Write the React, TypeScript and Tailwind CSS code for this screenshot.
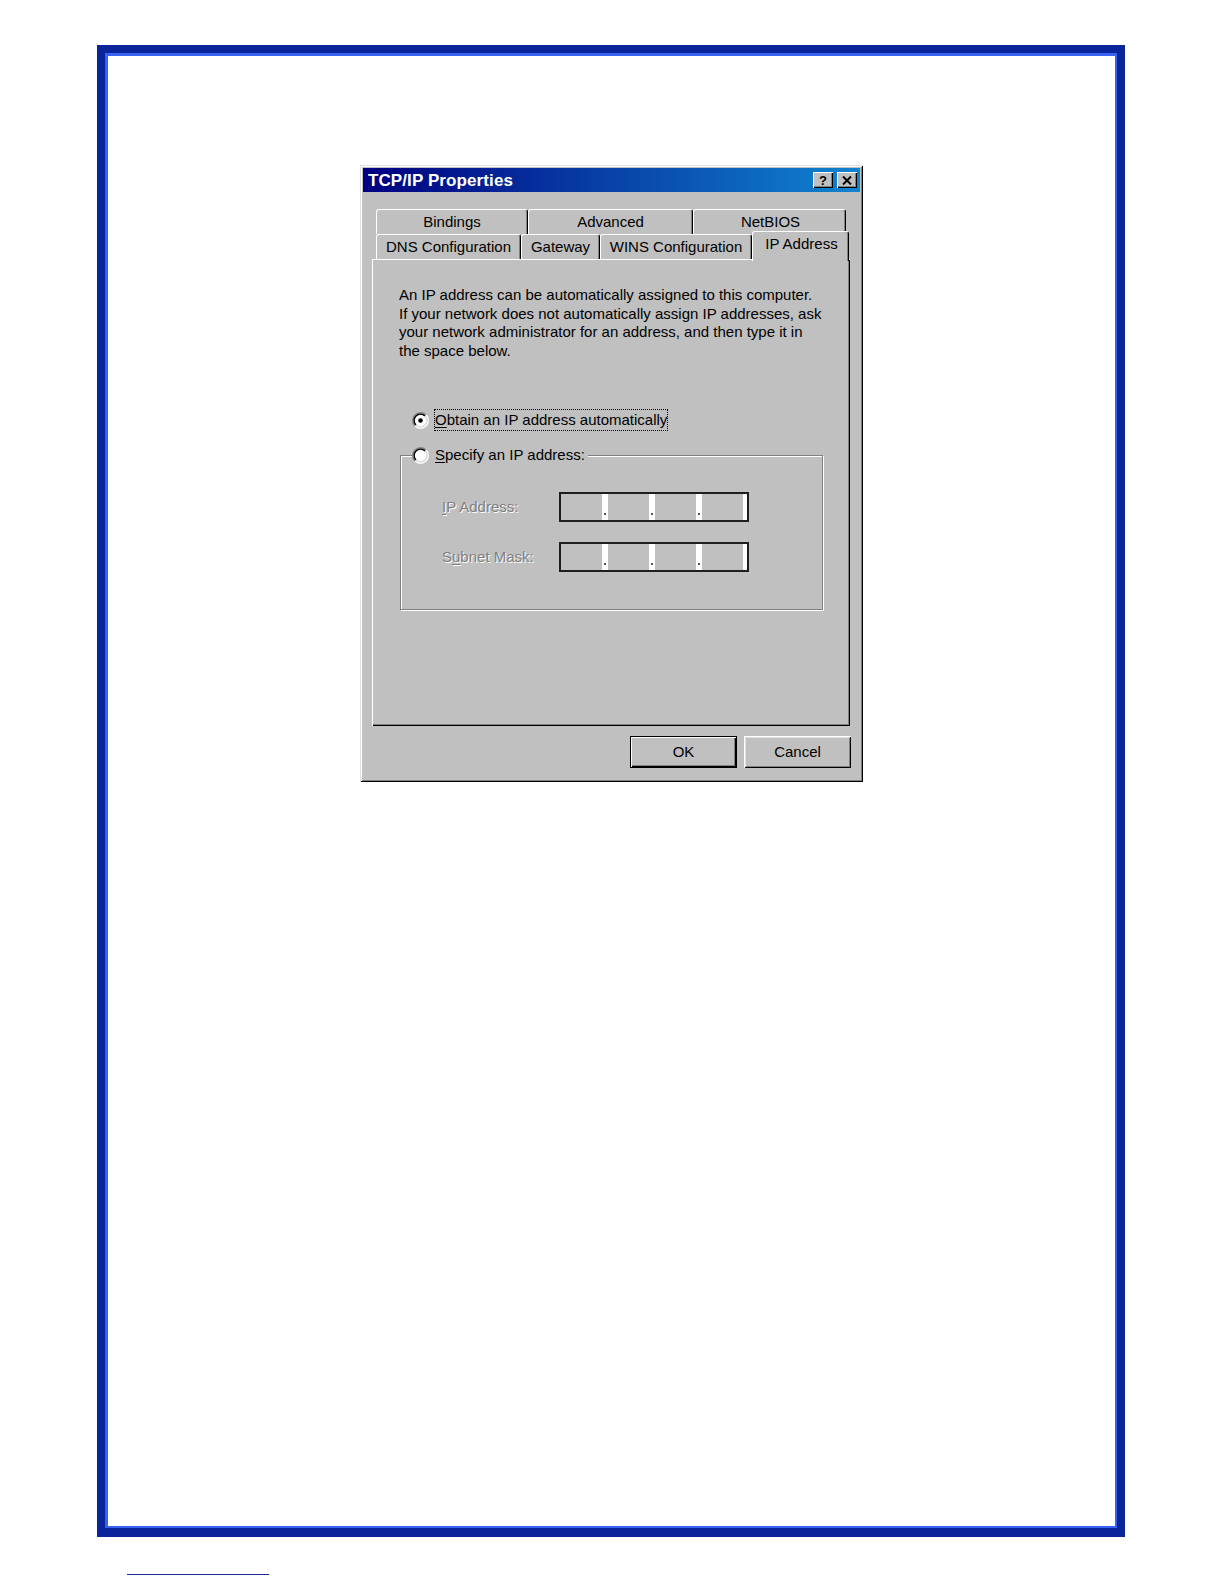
import React from "react";

function Radio({ checked }: { checked?: boolean }) {
  const c = 6;
  const p = (r: number) => {
    const d = r * 0.7071;
    return { blx: c - d, bly: c + d, trx: c + d, try_: c - d };
  };
  const o = p(5.5);
  const i = p(4.5);
  return (
    <svg width="17" height="17" viewBox="0 0 12 12" className="shrink-0">
      <circle cx="6" cy="6" r="4.2" fill="#ffffff" />
      <path d={`M${o.blx} ${o.bly} A5.5 5.5 0 0 1 ${o.trx} ${o.try_}`} stroke="#808080" strokeWidth="1" fill="none" />
      <path d={`M${o.trx} ${o.try_} A5.5 5.5 0 0 1 ${o.blx} ${o.bly}`} stroke="#ffffff" strokeWidth="1" fill="none" />
      <path d={`M${i.blx} ${i.bly} A4.5 4.5 0 0 1 ${i.trx} ${i.try_}`} stroke="#000000" strokeWidth="1" fill="none" />
      <path d={`M${i.trx} ${i.try_} A4.5 4.5 0 0 1 ${i.blx} ${i.bly}`} stroke="#dfdfdf" strokeWidth="1" fill="none" />
      {checked && <circle cx="6" cy="6" r="1.6" fill="#000000" />}
    </svg>
  );
}

function Sep() {
  return (
    <div className="w-[6px] shrink-0 bg-white flex items-end pb-[5px] pl-[2px]">
      <div className="w-[2px] h-[2px] bg-[#555555]" />
    </div>
  );
}

function IpBox() {
  return (
    <div className="w-[190px] h-[30px] border-2 border-[#1e1e1e] flex bg-[#c0c0c0]">
      <div className="w-[41px] shrink-0" />
      <Sep />
      <div className="w-[41px] shrink-0" />
      <Sep />
      <div className="w-[41px] shrink-0" />
      <Sep />
      <div className="w-[41px] shrink-0" />
      <div className="flex-1 bg-white" />
    </div>
  );
}

export default function App() {
  const tabBase =
    "h-[25px] flex items-center justify-center border-t border-l border-white border-r border-r-black rounded-t-[3px] shadow-[inset_-1px_0_0_#808080] bg-[#c0c0c0] text-[15px] text-black";
  return (
    <div className="w-[1224px] h-[1584px] bg-white pt-[45px] font-['Liberation_Sans',Arial,sans-serif] text-black overflow-hidden">
      {/* blue page frame */}
      <div className="ml-[97px] w-[1028px] h-[1492px] bg-[#0a249c] pt-[8px] pl-[8px] pr-[8px] pb-[9px]">
        <div className="w-full h-full bg-white border-t-[3px] border-l-[3px] border-r-2 border-b-2 border-[#3862f0] pt-[109px]">
          {/* dialog */}
          <div className="ml-[252px] w-[503px] h-[617px] bg-[#c0c0c0] p-[3px] flex flex-col shadow-[inset_1px_1px_0_#dfdfdf,inset_-1px_-1px_0_#000,inset_2px_2px_0_#fff,inset_-2px_-2px_0_#808080]">
            {/* title bar */}
            <div className="h-[24px] flex items-center pl-[5px] pr-[3px] bg-[linear-gradient(to_right,#000080,#1084d0)]">
              <span className="text-white font-bold text-[17px] leading-none tracking-[0.1px]">TCP/IP Properties</span>
              <div className="ml-auto flex gap-[4px]">
                <div className="w-[20px] h-[16px] bg-[#c0c0c0] flex items-center justify-center shadow-[inset_1px_1px_0_#fff,inset_-1px_-1px_0_#000,inset_-2px_-2px_0_#808080]">
                  <span className="font-bold text-[13px] leading-none">?</span>
                </div>
                <div className="w-[20px] h-[16px] bg-[#c0c0c0] flex items-center justify-center shadow-[inset_1px_1px_0_#fff,inset_-1px_-1px_0_#000,inset_-2px_-2px_0_#808080]">
                  <svg width="10" height="9" viewBox="0 0 10 9">
                    <path d="M1 0.5 L9 8.5 M9 0.5 L1 8.5" stroke="#000" strokeWidth="2" fill="none" />
                  </svg>
                </div>
              </div>
            </div>

            {/* tabs */}
            <div className="mt-[17px] ml-[9px] w-[477px] h-[50px] flex flex-col">
              <div className="h-[25px] flex pl-[4px]">
                <div className={`${tabBase} w-[152px]`}>Bindings</div>
                <div className={`${tabBase} w-[165px]`}>Advanced</div>
                <div className={`${tabBase} w-[153px] pl-[2px]`}>NetBIOS</div>
              </div>
              <div className="h-[25px] flex pl-[4px] items-start">
                <div className={`${tabBase} w-[145px]`}>DNS Configuration</div>
                <div className={`${tabBase} w-[79px]`}>Gateway</div>
                <div className={`${tabBase} w-[152px]`}>WINS Configuration</div>
                <div className="relative z-10 -mt-[3px] w-[97px] h-[30px] pb-[4px] pl-[2px] flex items-center justify-center border-t border-l border-white border-r border-r-black rounded-t-[3px] shadow-[inset_-1px_0_0_#808080] bg-[#c0c0c0] text-[15px]">
                  IP Address
                </div>
              </div>
            </div>

            {/* panel */}
            <div className="ml-[9px] w-[478px] h-[467px] flex flex-col shadow-[inset_1px_1px_0_#fff,inset_-1px_-1px_0_#000,inset_-2px_-2px_0_#808080]">
              <p className="ml-[27px] mt-[27px] text-[15px] leading-[18.5px] whitespace-nowrap">
                An IP address can be automatically assigned to this computer.
                <br />
                If your network does not automatically assign IP addresses, ask
                <br />
                your network administrator for an address, and then type it in
                <br />
                the space below.
              </p>

              <div className="mt-[49px] ml-[40px] h-[22px] flex items-center">
                <Radio checked />
                <span className="ml-[5px] h-[22px] flex items-center border border-dotted border-black text-[15px] whitespace-nowrap">
                  <span className="underline underline-offset-2">O</span>btain an IP address automatically
                </span>
              </div>

              <fieldset className="mt-[15px] ml-[28px] w-[423px] h-[164px] border border-[#808080] shadow-[inset_1px_1px_0_#fff,1px_1px_0_#fff]">
                <legend className="ml-[11px] pr-[3px] h-[18px] flex items-center bg-[#c0c0c0] text-[15px] whitespace-nowrap">
                  <Radio />
                  <span className="ml-[6px]">
                    <span className="underline underline-offset-2">S</span>pecify an IP address:
                  </span>
                </legend>
                <div className="mt-[28px] ml-[41px] h-[30px] flex items-center">
                  <span className="w-[117px] text-[15px] text-[#808080] [text-shadow:1px_1px_0_#ffffff]">
                    <span className="underline underline-offset-2">I</span>P Address:
                  </span>
                  <IpBox />
                </div>
                <div className="mt-[20px] ml-[41px] h-[30px] flex items-center">
                  <span className="w-[117px] text-[15px] text-[#808080] [text-shadow:1px_1px_0_#ffffff]">
                    S<span className="underline underline-offset-2">u</span>bnet Mask:
                  </span>
                  <IpBox />
                </div>
              </fieldset>
            </div>

            {/* buttons */}
            <div className="mt-[10px] pr-[9px] flex justify-end gap-[7px]">
              <button className="w-[107px] h-[32px] border border-black bg-[#c0c0c0] text-[15px] flex items-center justify-center shadow-[inset_1px_1px_0_#fff,inset_-1px_-1px_0_#000,inset_-2px_-2px_0_#808080]">
                OK
              </button>
              <button className="w-[107px] h-[32px] bg-[#c0c0c0] text-[15px] flex items-center justify-center shadow-[inset_1px_1px_0_#fff,inset_-1px_-1px_0_#000,inset_2px_2px_0_#dfdfdf,inset_-2px_-2px_0_#808080]">
                Cancel
              </button>
            </div>
          </div>
        </div>
      </div>
      <div className="mt-[37px] ml-[127px] w-[142px] h-px bg-[#1c2c9c]" />
    </div>
  );
}
